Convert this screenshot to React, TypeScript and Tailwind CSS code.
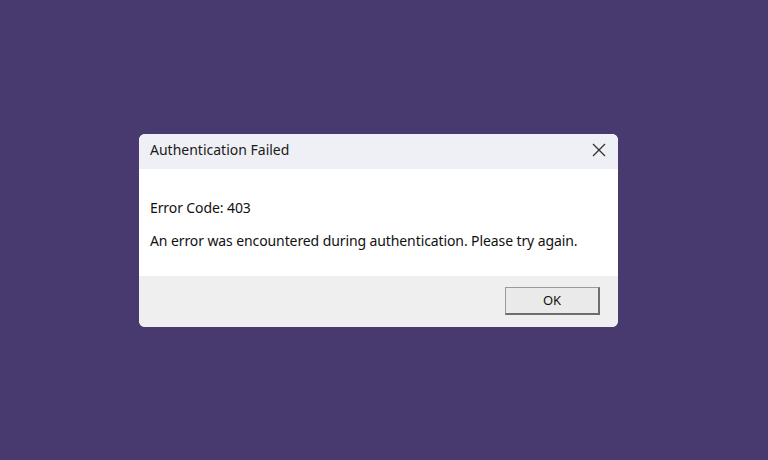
const App = () => {
  return (
    <div className="w-[768px] h-[460px] bg-[#483a6e] flex items-center justify-center pr-[11px] font-['Noto_Sans',sans-serif]">
      <div className="w-[479px] h-[193px] rounded-[6px] overflow-hidden flex flex-col bg-white">
        {/* Title bar */}
        <div className="h-[35px] bg-[#eff0f5] flex items-center justify-between pl-[11px] pr-[11px] pb-[3px]">
          <span className="text-[14px] text-[#1a1a1a]">Authentication Failed</span>
          <svg width="16" height="16" viewBox="0 0 16 16" className="text-[#333]">
            <path d="M2 2 L14 14 M14 2 L2 14" stroke="currentColor" strokeWidth="1.3" fill="none" />
          </svg>
        </div>

        {/* Body */}
        <div className="flex-1 bg-white pl-[11px] pt-[29px] text-[14px] text-[#111] tracking-[-0.1px]">
          <p className="leading-[19px]">Error Code: 403</p>
          <p className="leading-[19px] mt-[14px]">An error was encountered during authentication. Please try again.</p>
        </div>

        {/* Footer */}
        <div className="h-[51px] bg-[#efefef] flex items-center justify-end pr-[18px]">
          <button className="w-[95px] h-[28px] bg-[#eaeaea] border border-[#9a9a9a] border-r-[#6e6e6e] border-b-[#6e6e6e] border-b-2 border-r-2 text-[13px] text-[#111] flex items-center justify-center">
            OK
          </button>
        </div>
      </div>
    </div>
  );
};

export default App;
